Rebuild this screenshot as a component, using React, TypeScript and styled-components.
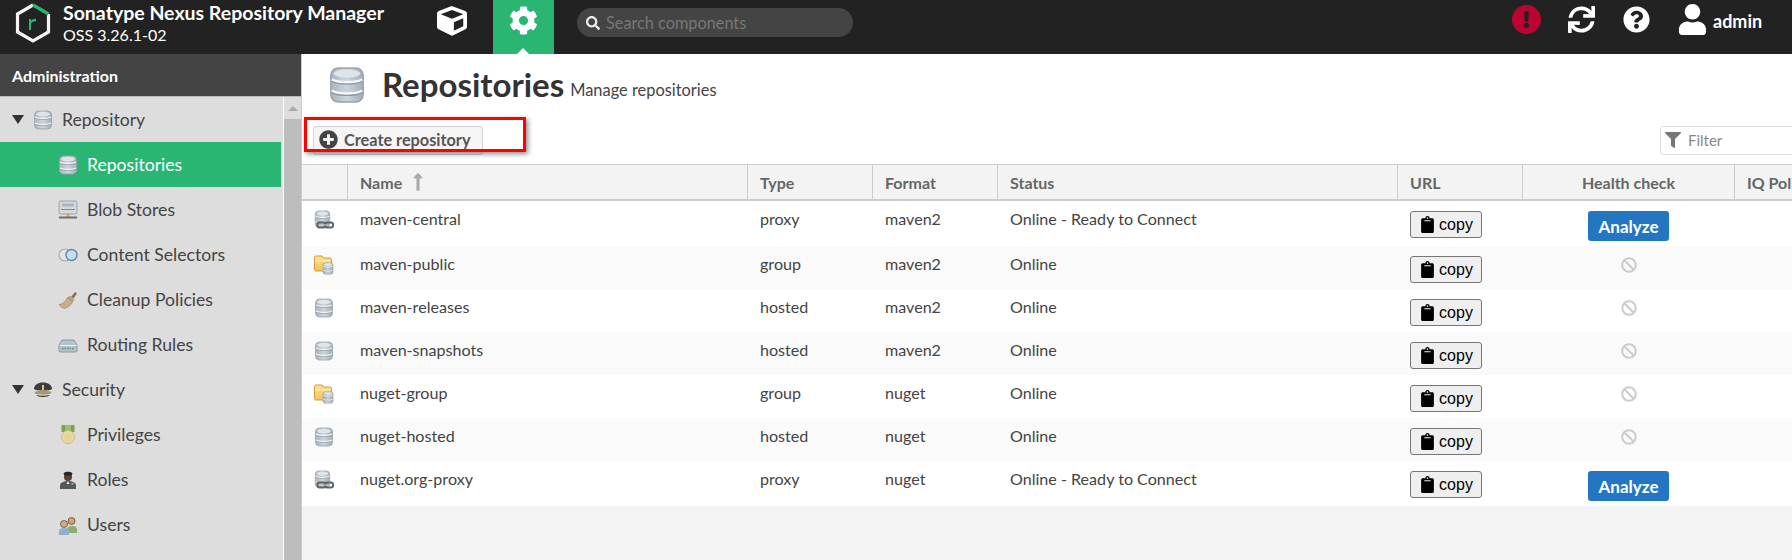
import styled, { createGlobalStyle } from 'styled-components'
import {
  FaBan,
  FaClipboard,
  FaCog,
  FaCube,
  FaExclamation,
  FaFilter,
  FaLongArrowAltUp,
  FaPlusCircle,
  FaQuestionCircle,
  FaSearch,
  FaSync,
  FaUser,
} from 'react-icons/fa'

const GlobalStyle = createGlobalStyle`
  html, body {
    margin: 0;
    height: 560px;
    overflow: hidden;
    background: #fff;
    font-family: Lato, "Open Sans", sans-serif;
  }
  * { box-sizing: border-box; }
`

type IconKind =
  | 'db'
  | 'proxy'
  | 'group'
  | 'blob'
  | 'selector'
  | 'brush'
  | 'routing'
  | 'hat'
  | 'medal'
  | 'officer'
  | 'users'
  | 'anon'

const DbShape = ({ x = 0, y = 0, w = 20, h = 20 }: { x?: number; y?: number; w?: number; h?: number }) => (
  <svg x={x} y={y} width={w} height={h} viewBox="0 0 20 20" preserveAspectRatio="none">
    <rect x="1.500" y="1" width="17" height="18" rx="4" fill="url(#dbFill)" stroke="#9aa3ab" strokeWidth="0.8" />
    <path d="M2 7c3 2 13 2 16 0M2 13c3 2 13 2 16 0" fill="none" stroke="#f4f6f8" strokeWidth="1.400" />
    <path d="M2 8c3 2 13 2 16 0M2 14c3 2 13 2 16 0" fill="none" stroke="#8d979f" strokeWidth="0.7" />
    <ellipse cx="10" cy="4" rx="7" ry="2.200" fill="#dfe4e8" />
  </svg>
)

const SmallIcon = ({ kind, size = 20 }: { kind: IconKind; size?: number }) => (
  <svg width={size} height={size} viewBox="0 0 20 20">
    <defs>
      <linearGradient id="dbFill" x1="0" x2="1" y1="0" y2="0">
        <stop offset="0" stopColor="#aab4bd" />
        <stop offset="0.5" stopColor="#ccd5dc" />
        <stop offset="1" stopColor="#a3adb6" />
      </linearGradient>
      <linearGradient id="folderFill" x1="0" x2="0" y1="0" y2="1">
        <stop offset="0" stopColor="#fde28e" />
        <stop offset="1" stopColor="#f4c25a" />
      </linearGradient>
    </defs>
    {kind === 'db' && <DbShape />}
    {kind === 'proxy' && (
      <>
        <DbShape w={17} h={18} />
        <rect x="3.500" y="12.500" width="8" height="5" rx="2" fill="none" stroke="#5f6367" strokeWidth="2" />
        <rect x="11" y="12.500" width="8" height="5" rx="2" fill="none" stroke="#5f6367" strokeWidth="2" />
        <path d="M8 15h6" stroke="#b4b8bb" strokeWidth="1.400" />
      </>
    )}
    {kind === 'group' && (
      <>
        <path d="M.5 2.500c0-1 .5-1.500 1.500-1.500h6l1.500 2h6.500c1 0 1.500.5 1.500 1.500v10c0 .8-.5 1.500-1.500 1.500H2c-1 0-1.500-.7-1.500-1.500z" fill="url(#folderFill)" stroke="#d39a3c" />
        <path d="M1 6h16" stroke="#fff3c8" />
        <DbShape x={8} y={7} w={12} h={13} />
      </>
    )}
    {kind === 'blob' && (
      <>
        <rect x="1" y="1" width="18" height="13" rx="2" fill="#d3d8dc" stroke="#8e979e" strokeWidth="0.8" />
        <rect x="4" y="3.500" width="12" height="3" fill="#aeb6bd" />
        <path d="M3 9.500h14" stroke="#858d94" />
        <rect x="8.500" y="13" width="3" height="4" fill="#d9a94a" />
        <rect x="1" y="16.500" width="18" height="2" fill="#6b7074" />
      </>
    )}
    {kind === 'selector' && (
      <>
        <circle cx="7" cy="10" r="6" fill="#e3e5e7" stroke="#a8acb0" strokeWidth="1.200" />
        <circle cx="13.500" cy="10" r="5.500" fill="#c8dcec" stroke="#5e87aa" strokeWidth="1.400" />
      </>
    )}
    {kind === 'brush' && (
      <>
        <path d="M13 7l4-5 2 1.500-3.500 5z" fill="#8f6d49" />
        <path d="M12 5.500l4.500 4.500-2 2-5-4.500z" fill="#a9a39a" />
        <path d="M9.500 7.500l5 4.500c-2 3.500-5 6-8 6.500-2-.5-4-2-5.500-4 3 0 6.500-3 8.500-7z" fill="#c7ae86" stroke="#96805d" strokeWidth="0.6" />
      </>
    )}
    {kind === 'routing' && (
      <>
        <path d="M1 10l3-5h12l3 5v6c0 .8-.5 1-1 1H2c-.5 0-1-.2-1-1z" fill="#b4c3cf" stroke="#7d8a94" strokeWidth="0.8" />
        <path d="M1.500 10.500h17" stroke="#e8eef2" />
        <path d="M4 13.500h12" stroke="#6d8a55" strokeWidth="1.500" strokeDasharray="1.500 1" />
      </>
    )}
    {kind === 'hat' && (
      <>
        <path d="M1 9c0-4 4-6.500 9-6.500S19 5 19 9c-2 2-16 2-18 0z" fill="#3d3d3b" />
        <path d="M2 12c3-2 13-2 16 0v1.500c-3 1.500-13 1.500-16 0z" fill="#a89a6e" />
        <path d="M3 15c3 1 11 1 14 0-2 2.500-12 2.500-14 0z" fill="#2a2a2a" />
        <path d="M9 5h2v5H9z" fill="#d9c67c" />
      </>
    )}
    {kind === 'medal' && (
      <>
        <rect x="3.500" y="0" width="13" height="7" fill="#79a34e" />
        <rect x="7" y="0" width="6" height="7" fill="#9ac06e" />
        <circle cx="10" cy="12" r="6.500" fill="#ecdca9" stroke="#c9b678" />
        <circle cx="10" cy="12" r="4.500" fill="#e5d49b" />
      </>
    )}
    {kind === 'officer' && (
      <>
        <path d="M2 19v-4c0-2 4-4 8-4s8 2 8 4v4z" fill="#55595c" />
        <circle cx="10" cy="7" r="4" fill="#5d3f2b" />
        <path d="M5.500 3.500C6.500 1 13.500 1 14.500 3.500l-1 2h-7z" fill="#23252a" />
        <path d="M10 11l-1.500 3h3z" fill="#f0f0f0" />
        <rect x="13.500" y="13" width="2" height="1.500" fill="#d9b84a" />
      </>
    )}
    {kind === 'users' && (
      <>
        <path d="M9 18v-4c0-2 2-3 5-3s5 1 5 3v4z" fill="#8cad6e" />
        <circle cx="13.500" cy="6" r="3.500" fill="#c9a27e" stroke="#6b4a33" strokeWidth="0.8" />
        <path d="M1 20v-4c0-2 2-3 5-3s5 1 5 3v4z" fill="#8eb0d0" />
        <circle cx="6" cy="9" r="3.500" fill="#d6ac88" stroke="#6b4a33" strokeWidth="0.8" />
      </>
    )}
    {kind === 'anon' && (
      <>
        <circle cx="10" cy="3" r="3" fill="#555" />
        <path d="M3 19v-6c0-2 3-4 7-4s7 2 7 4v6z" fill="#777" />
      </>
    )}
  </svg>
)

const Logo = () => (
  <svg width="38" height="42" viewBox="0 0 38 42">
    <path d="M19 3L3.500 12v18L19 39l15.500-9V12" fill="none" stroke="#f5f5f5" strokeWidth="3.200" />
    <path d="M19 3l15.500 9" fill="none" stroke="#2ab573" strokeWidth="3.200" />
    <path d="M15 28V17h2v2c1-1.500 2.500-2.200 5-2.200v2.400c-3 0-5 1-5 3.800v5z" fill="#2ab573" />
  </svg>
)

const Page = styled.div`
  width: 1792px;
  height: 560px;
  display: flex;
  flex-direction: column;
  overflow: hidden;
`

const TopBar = styled.header`
  height: 54px;
  flex: none;
  display: flex;
  align-items: stretch;
  background: #222;
  color: #fff;
`

const Brand = styled.div`
  width: 410px;
  padding: 2px 0 0 14px;
  display: flex;
  gap: 11px;
`

const BrandText = styled.div`
  display: flex;
  flex-direction: column;
`

const BrandName = styled.div`
  font-size: 19.500px;
  font-weight: 700;
  line-height: 21px;
  white-space: nowrap;
`

const BrandVersion = styled.div`
  font-size: 16px;
  line-height: 18px;
  margin-top: 3px;
`

const NavTab = styled.div<{ $active?: boolean; $width: number }>`
  position: relative;
  width: ${(p) => p.$width}px;
  display: flex;
  align-items: flex-start;
  justify-content: center;
  padding-top: 6px;
  background: ${(p) => (p.$active ? '#2ab573' : 'transparent')};
  ${(p) =>
    p.$active &&
    `&::after {
      content: '';
      position: absolute;
      left: 24px;
      bottom: 0;
      border: 6px solid transparent;
      border-top: 0;
      border-bottom-color: #fff;
    }`}
`

const SearchBox = styled.div`
  width: 276px;
  height: 29px;
  margin: 8px 0 0 23px;
  padding-left: 9px;
  display: flex;
  align-items: center;
  gap: 6px;
  border-radius: 15px;
  background: #444;
  color: #777;
  font-size: 16.300px;
  svg {
    color: #eee;
    font-size: 14px;
  }
`

const TopActions = styled.div`
  margin-left: auto;
  padding: 5px 0 0 0;
  width: 280px;
  display: flex;
  align-items: flex-start;
  font-size: 27px;
`

const AlertBadge = styled.div`
  width: 29px;
  height: 29px;
  border-radius: 50%;
  background: #bc0430;
  color: #222;
  font-size: 17px;
  display: flex;
  align-items: center;
  justify-content: center;
`

const ActionIcon = styled.div<{ $gap: number }>`
  margin-left: ${(p) => p.$gap}px;
  height: 29px;
  display: flex;
  align-items: center;
`

const UserName = styled.div`
  margin-left: 5px;
  font-size: 18px;
  font-weight: 700;
  line-height: 32px;
`

const Body = styled.div`
  flex: 1;
  min-height: 0;
  display: flex;
`

const Sidebar = styled.aside`
  width: 302px;
  flex: none;
  display: flex;
  flex-direction: column;
  border-right: 1px solid #ccc;
`

const SidebarTitle = styled.div`
  height: 43px;
  flex: none;
  padding-left: 12px;
  display: flex;
  align-items: center;
  background: #444;
  border-bottom: 1px solid #bbb;
  color: #fff;
  font-size: 16px;
  font-weight: 700;
`

const SidebarBody = styled.div`
  flex: 1;
  min-height: 0;
  display: flex;
  overflow: hidden;
  background: #fff;
`

const Tree = styled.nav`
  width: 283px;
  flex: none;
  background: #ddd;
  padding-right: 2px;
`

const TreeRow = styled.div<{ $selected?: boolean; $child?: boolean }>`
  height: 45px;
  display: flex;
  align-items: center;
  gap: 9px;
  padding-left: ${(p) => (p.$child ? '58px' : '12px')};
  font-size: 17.600px;
  color: ${(p) => (p.$selected ? '#fff' : '#444')};
  background: ${(p) => (p.$selected ? '#2ab573' : 'transparent')};
  white-space: nowrap;
`

const Caret = styled.span`
  width: 0;
  height: 0;
  border-style: solid;
  border-width: 9px 6.500px 0;
  border-color: #333 transparent transparent;
`

const ScrollTrack = styled.div`
  flex: 1;
  margin-left: 1px;
  display: flex;
  flex-direction: column;
  background: #ddd;
`

const ScrollArrow = styled.div`
  height: 22px;
  display: flex;
  align-items: center;
  justify-content: center;
  &::before {
    content: '';
    border-style: solid;
    border-width: 0 5px 5px;
    border-color: transparent transparent #aaa;
  }
`

const ScrollThumb = styled.div`
  flex: 1;
  background: #bdbdbd;
`

const Content = styled.main`
  flex: 1;
  min-width: 0;
  display: flex;
  flex-direction: column;
  background: #f4f4f4;
  overflow: hidden;
`

const PageHead = styled.div`
  height: 72px;
  flex: none;
  padding: 12px 0 0 26px;
  display: flex;
  align-items: flex-start;
  background: #fff;
`

const PageTitle = styled.h1`
  margin: -2px 0 0 16px;
  font-size: 33px;
  font-weight: 700;
  line-height: 40px;
  color: #333;
`

const PageSub = styled.span`
  margin: 14px 0 0 6px;
  font-size: 16.400px;
  line-height: 20px;
  color: #444;
`

const Toolbar = styled.div`
  position: relative;
  height: 38px;
  flex: none;
  padding-left: 11px;
  display: flex;
  align-items: flex-start;
  background: #fff;
`

const CreateButton = styled.div`
  width: 170px;
  height: 29px;
  padding: 0 0 2px 5px;
  display: flex;
  align-items: center;
  gap: 6px;
  flex: none;
  background: #f5f5f5;
  border: 1px solid #d4d4d4;
  border-radius: 3px;
  color: #555;
  font-size: 16.300px;
  font-weight: 700;
  svg {
    font-size: 19px;
    color: #444;
  }
`

const Annotation = styled.div`
  position: absolute;
  left: 2px;
  top: -9px;
  width: 222px;
  height: 35px;
  border: 3px solid #f00;
  box-shadow: 2px 2px 5px rgba(0, 0, 0, 0.45);
  pointer-events: none;
`

const FilterBox = styled.div`
  width: 170px;
  height: 29px;
  flex: none;
  margin-left: 1177px;
  padding: 0 0 1px 4px;
  display: flex;
  align-items: center;
  gap: 7px;
  background: #fff;
  border: 1px solid #ddd;
  border-radius: 3px;
  color: #888;
  font-size: 15px;
  svg {
    font-size: 16px;
    color: #777;
  }
`

const columns = '46px 400px 125px 125px 400px 125px 212px 200px'

const HeaderRow = styled.div`
  height: 37px;
  flex: none;
  display: grid;
  grid-template-columns: ${columns};
  background: #f3f3f3;
  border-top: 1px solid #ccc;
  border-bottom: 2px solid #ccc;
`

const HeaderCell = styled.div<{ $center?: boolean }>`
  padding: 0 12px;
  display: flex;
  align-items: center;
  justify-content: ${(p) => (p.$center ? 'center' : 'flex-start')};
  gap: 6px;
  border-right: 1px solid #ccc;
  color: #666;
  font-size: 16px;
  font-weight: 700;
  white-space: nowrap;
  svg {
    color: #aaa;
    font-size: 20px;
  }
`

const DataRow = styled.div<{ $odd: boolean; $tall: boolean }>`
  height: ${(p) => (p.$tall ? '45px' : '43px')};
  flex: none;
  display: grid;
  grid-template-columns: ${columns};
  background: ${(p) => (p.$odd ? '#fff' : '#fafafa')};
`

const Cell = styled.div`
  padding: 8px 12px 0;
  color: #444;
  font-size: 16.100px;
  line-height: 20px;
  white-space: nowrap;
`

const IconCell = styled.div`
  padding: 9px 0 0 12px;
  line-height: 0;
`

const ButtonCell = styled.div`
  padding: 10px 12px 0;
`

const HealthCell = styled.div`
  padding: 10px 1px 0 0;
  display: flex;
  justify-content: center;
  color: #ccc;
  font-size: 16px;
`

const BanMark = styled.span`
  height: 16px;
  margin: 1px 0 0 1px;
  display: block;
  line-height: 0;
`

const CopyButton = styled.div`
  width: 72px;
  height: 27px;
  display: flex;
  align-items: center;
  justify-content: center;
  gap: 3px;
  background: #efefef;
  border: 1px solid #767676;
  border-radius: 3px;
  color: #000;
  font-family: "Liberation Sans", Arial, sans-serif;
  font-size: 16px;
  svg {
    font-size: 17px;
  }
`

const AnalyzeButton = styled.div`
  width: 81px;
  height: 30px;
  display: flex;
  align-items: center;
  justify-content: center;
  background: #2476c3;
  border-radius: 3px;
  color: #fff;
  font-size: 17px;
  font-weight: 700;
`

const adminTree: { label: string; icon: IconKind; group?: boolean; selected?: boolean }[] = [
  { label: 'Repository', icon: 'db', group: true },
  { label: 'Repositories', icon: 'db', selected: true },
  { label: 'Blob Stores', icon: 'blob' },
  { label: 'Content Selectors', icon: 'selector' },
  { label: 'Cleanup Policies', icon: 'brush' },
  { label: 'Routing Rules', icon: 'routing' },
  { label: 'Security', icon: 'hat', group: true },
  { label: 'Privileges', icon: 'medal' },
  { label: 'Roles', icon: 'officer' },
  { label: 'Users', icon: 'users' },
  { label: '', icon: 'anon' },
]

const repositories: { name: string; type: string; format: string; status: string }[] = [
  { name: 'maven-central', type: 'proxy', format: 'maven2', status: 'Online - Ready to Connect' },
  { name: 'maven-public', type: 'group', format: 'maven2', status: 'Online' },
  { name: 'maven-releases', type: 'hosted', format: 'maven2', status: 'Online' },
  { name: 'maven-snapshots', type: 'hosted', format: 'maven2', status: 'Online' },
  { name: 'nuget-group', type: 'group', format: 'nuget', status: 'Online' },
  { name: 'nuget-hosted', type: 'hosted', format: 'nuget', status: 'Online' },
  { name: 'nuget.org-proxy', type: 'proxy', format: 'nuget', status: 'Online - Ready to Connect' },
]

const typeIcon: Record<string, IconKind> = { proxy: 'proxy', group: 'group', hosted: 'db' }

const App = () => (
  <Page>
    <GlobalStyle />
    <TopBar>
      <Brand>
        <Logo />
        <BrandText>
          <BrandName>Sonatype Nexus Repository Manager</BrandName>
          <BrandVersion>OSS 3.26.1-02</BrandVersion>
        </BrandText>
      </Brand>
      <NavTab $width={83}>
        <FaCube size={30} />
      </NavTab>
      <NavTab $active $width={61}>
        <FaCog size={29} />
      </NavTab>
      <SearchBox>
        <FaSearch />
        Search components
      </SearchBox>
      <TopActions>
        <AlertBadge>
          <FaExclamation />
        </AlertBadge>
        <ActionIcon $gap={27}>
          <FaSync />
        </ActionIcon>
        <ActionIcon $gap={28}>
          <FaQuestionCircle />
        </ActionIcon>
        <ActionIcon $gap={27}>
          <FaUser size={31} />
        </ActionIcon>
        <UserName>admin</UserName>
      </TopActions>
    </TopBar>
    <Body>
      <Sidebar>
        <SidebarTitle>Administration</SidebarTitle>
        <SidebarBody>
          <Tree>
            {adminTree.map((item) => (
              <TreeRow key={item.icon + item.label} $child={!item.group} $selected={item.selected}>
                {item.group && <Caret />}
                <SmallIcon kind={item.icon} />
                {item.label}
              </TreeRow>
            ))}
          </Tree>
          <ScrollTrack>
            <ScrollArrow />
            <ScrollThumb />
          </ScrollTrack>
        </SidebarBody>
      </Sidebar>
      <Content>
        <PageHead>
          <SmallIcon kind="db" size={38} />
          <PageTitle>Repositories</PageTitle>
          <PageSub>Manage repositories</PageSub>
        </PageHead>
        <Toolbar>
          <CreateButton>
            <FaPlusCircle />
            Create repository
          </CreateButton>
          <Annotation />
          <FilterBox>
            <FaFilter />
            Filter
          </FilterBox>
        </Toolbar>
        <HeaderRow>
          <HeaderCell />
          <HeaderCell>
            Name <FaLongArrowAltUp />
          </HeaderCell>
          <HeaderCell>Type</HeaderCell>
          <HeaderCell>Format</HeaderCell>
          <HeaderCell>Status</HeaderCell>
          <HeaderCell>URL</HeaderCell>
          <HeaderCell $center>Health check</HeaderCell>
          <HeaderCell>IQ Policy Violations</HeaderCell>
        </HeaderRow>
        {repositories.map((repo, index) => (
          <DataRow key={repo.name} $odd={index % 2 === 0} $tall={repo.type === 'proxy'}>
            <IconCell>
              <SmallIcon kind={typeIcon[repo.type]} />
            </IconCell>
            <Cell>{repo.name}</Cell>
            <Cell>{repo.type}</Cell>
            <Cell>{repo.format}</Cell>
            <Cell>{repo.status}</Cell>
            <ButtonCell>
              <CopyButton>
                <FaClipboard />
                copy
              </CopyButton>
            </ButtonCell>
            <HealthCell>
              {repo.type === 'proxy' ? (
                <AnalyzeButton>Analyze</AnalyzeButton>
              ) : (
                <BanMark>
                  <FaBan />
                </BanMark>
              )}
            </HealthCell>
            <Cell />
          </DataRow>
        ))}
      </Content>
    </Body>
  </Page>
)

export default App
